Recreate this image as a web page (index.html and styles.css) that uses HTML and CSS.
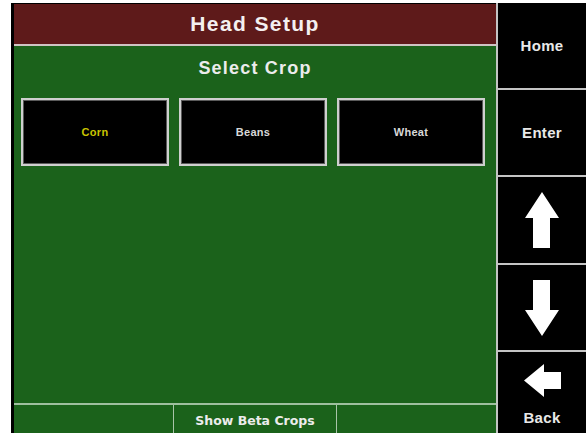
FILE: index.html
```html
<!DOCTYPE html>
<html lang="en">
<head>
<meta charset="utf-8">
<title>Head Setup</title>
<link rel="stylesheet" href="styles.css">
</head>
<body>
<div class="screen">
  <main class="main">
    <header class="header">Head Setup</header>
    <section class="content">
      <h2 class="subtitle">Select Crop</h2>
      <div class="crops">
        <button class="crop crop-selected">Corn</button>
        <button class="crop">Beans</button>
        <button class="crop">Wheat</button>
      </div>
      <div class="spacer"></div>
      <footer class="bottom-bar">
        <div class="seg"></div>
        <div class="seg seg-label">Show Beta Crops</div>
        <div class="seg"></div>
      </footer>
    </section>
  </main>
  <nav class="side">
    <div class="key">Home</div>
    <div class="key">Enter</div>
    <div class="key">
      <svg class="arrow" width="34" height="56" viewBox="0 0 34 56"><polygon points="17,0 34,26 25,26 25,56 8,56 8,26 0,26" fill="#fff"/></svg>
    </div>
    <div class="key">
      <svg class="arrow" width="34" height="56" viewBox="0 0 34 56"><polygon points="8,0 25,0 25,30 34,30 17,56 0,30 8,30" fill="#fff"/></svg>
    </div>
    <div class="key key-back">
      <svg class="arrow" width="37" height="33" viewBox="0 0 37 33"><polygon points="0,16.5 20,0 20,8 37,8 37,25 20,25 20,33" fill="#fff"/></svg>
      <span class="back-label">Back</span>
    </div>
  </nav>
</div>
</body>
</html>
```
FILE: styles.css
```css
html, body {
  margin: 0;
  padding: 0;
  background: #fff;
}

.screen {
  margin: 3px 0 0 11px;
  width: 575px;
  height: 430px;
  display: flex;
  background: #000;
  padding-left: 3px;
  box-sizing: border-box;
  font-family: "Liberation Sans", Arial, sans-serif;
  color: #f2f2f2;
}

.main {
  width: 482px;
  display: flex;
  flex-direction: column;
  border-right: 2px solid #c4c4c4;
  padding-top: 1px;
  box-sizing: content-box;
}

.header {
  height: 40px;
  line-height: 40px;
  background: #5e1a1a;
  border-bottom: 2px solid #cfc4c4;
  text-align: center;
  font-size: 21px;
  font-weight: 700;
  letter-spacing: 1.4px;
  color: #f4f0f0;
}

.content {
  flex: 1;
  display: flex;
  flex-direction: column;
  background: #1b621b;
}

.subtitle {
  margin: 0;
  height: 44px;
  line-height: 44px;
  text-align: center;
  font-size: 18px;
  font-weight: 700;
  letter-spacing: 1.2px;
  color: #ececec;
}

.crops {
  margin-top: 8px;
  padding-left: 7px;
  display: grid;
  grid-template-columns: repeat(3, 148px);
  column-gap: 10px;
}

.crop {
  height: 68px;
  background: #000;
  border: 2px solid #cfcfcf;
  box-shadow: inset 0 0 0 1px #5a5a5a;
  font-family: "Liberation Sans", Arial, sans-serif;
  font-size: 11px;
  font-weight: 700;
  letter-spacing: 0.3px;
  color: #d8d8d8;
  padding: 0;
}

.crop-selected {
  color: #c9c400;
}

.spacer {
  flex: 1;
}

.bottom-bar {
  height: 28px;
  border-top: 2px solid #9fbf9f;
  display: grid;
  grid-template-columns: 159px 163px 1fr;
}

.seg + .seg {
  border-left: 1px solid #a9c4a9;
}

.seg-label {
  display: flex;
  align-items: center;
  justify-content: center;
  font-family: "DejaVu Sans", sans-serif;
  font-size: 12.5px;
  font-weight: 700;
  color: #ececec;
  padding-top: 2px;
}

.side {
  flex: 1;
  display: grid;
  grid-template-rows: 85px 87px 88px 87px 1fr;
}

.key {
  display: flex;
  align-items: center;
  justify-content: center;
  font-size: 15px;
  font-weight: 700;
  letter-spacing: 0.3px;
  color: #e8e8e8;
}

.key + .key {
  border-top: 2px solid #c4c4c4;
}

.key-back {
  flex-direction: column;
  justify-content: flex-start;
  padding-top: 12px;
}

.back-label {
  margin-top: 12px;
}
```
